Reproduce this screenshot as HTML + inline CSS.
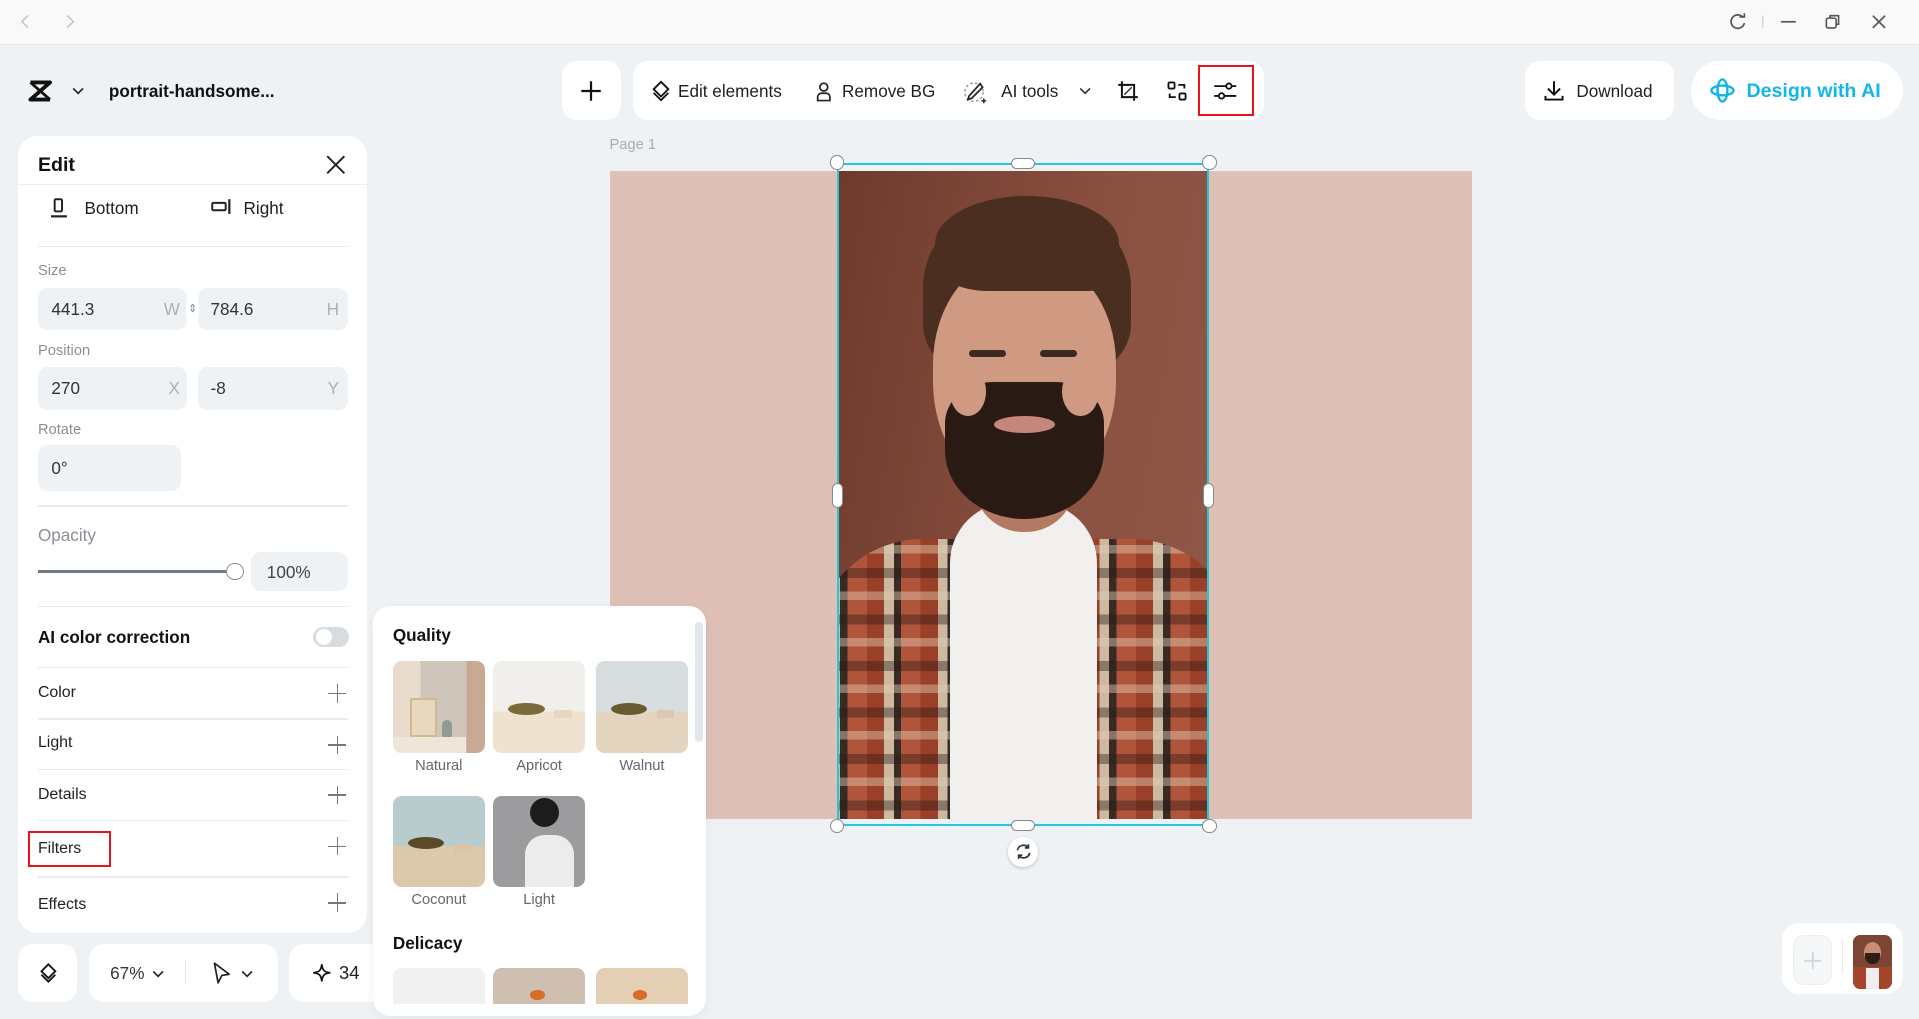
<!DOCTYPE html>
<html><head><meta charset="utf-8">
<style>
*{box-sizing:border-box;margin:0;padding:0}
html,body{width:1919px;height:1019px;overflow:hidden;background:#eef2f5}
#root{zoom:1.2239;width:1568px;height:833px;position:relative;font-family:"Liberation Sans",sans-serif;color:#1f1f1f;background:#eef2f5;overflow:hidden}
.a{position:absolute}
.card{position:absolute;background:#fff;border-radius:14px}
.t{position:absolute;white-space:nowrap}
.inp{position:absolute;background:#eef2f5;border-radius:8px;height:35px;font-size:14px;color:#333}
.inp span{position:absolute;top:9px}
.lbl{position:absolute;font-size:12px;color:#8a8f96}
.hr{position:absolute;left:31px;width:253px;height:1px;background:#e9ebee}
.row{position:absolute;left:31px;font-size:13px;color:#222}
.plus{position:absolute;left:268px;width:15px;height:15px}
.plus:before{content:"";position:absolute;left:7px;top:0;width:1.3px;height:15px;background:#777}
.plus:after{content:"";position:absolute;top:7px;left:0;height:1.3px;width:15px;background:#777}
.th{position:absolute;width:75px;height:75px;border-radius:7px;overflow:hidden}
.cap{position:absolute;width:75px;text-align:center;font-size:12px;color:#666}
.h{position:absolute;width:12px;height:12px;border-radius:50%;background:#fff;border:1.3px solid #888}
</style></head><body><div id="root">
<div class="a" style="left:0;top:0;width:1568px;height:37px;background:#f9f9f9;border-bottom:1px solid #e6e8ea"></div>
<svg class="a" style="left:14px;top:11px" width="50" height="14" viewBox="0 0 50 14"><path d="M9 2L4 7l5 5" fill="none" stroke="#c6c6c6" stroke-width="1.4"/><path d="M41 2l5 5-5 5" fill="none" stroke="#c6c6c6" stroke-width="1.4"/></svg>
<svg class="a" style="left:1410px;top:10px" width="136" height="16" viewBox="0 0 136 16"><path d="M14 4.5A5.5 5.5 0 1 0 15 9" fill="none" stroke="#555" stroke-width="1.4"/><path d="M11 4h4V1" fill="none" stroke="#555" stroke-width="1.4"/><line x1="30" y1="3" x2="30" y2="13" stroke="#ccc"/><line x1="45" y1="8" x2="57" y2="8" stroke="#555" stroke-width="1.4"/><rect x="82" y="5" width="8" height="8" rx="1.5" fill="none" stroke="#555" stroke-width="1.3"/><path d="M85 5V3h7v7h-2" fill="none" stroke="#555" stroke-width="1.3"/><path d="M120 3l10 10M130 3l-10 10" stroke="#555" stroke-width="1.4"/></svg>

<div class="a" style="left:8px;top:50px;width:232px;height:48px;border-radius:12px;background:#eef2f5"></div>
<svg class="a" style="left:23px;top:65px" width="20" height="18" viewBox="0 0 20 18"><path d="M2 2h16L2 16h16" fill="none" stroke="#111" stroke-width="3.2" stroke-linejoin="round"/><path d="M2 2l16 14M18 2L2 16" stroke="#111" stroke-width="2.2"/></svg>
<svg class="a" style="left:59px;top:70px" width="10" height="8" viewBox="0 0 10 8"><path d="M1 2l4 4 4-4" fill="none" stroke="#222" stroke-width="1.4"/></svg>
<div class="t" style="left:89px;top:66px;font-size:14px;font-weight:600;color:#111">portrait-handsome...</div>

<div class="card" style="left:459px;top:50px;width:48px;height:48px;border-radius:12px"></div>
<svg class="a" style="left:474px;top:65px" width="18" height="18"><path d="M9 1v16M1 9h16" stroke="#111" stroke-width="1.8"/></svg>
<div class="card" style="left:517px;top:50px;width:516px;height:48px;border-radius:12px"></div>
<svg class="a" style="left:531px;top:65px" width="18" height="18" viewBox="0 0 18 18"><path d="M9 1.5l6 6-6 6-6-6z" fill="none" stroke="#111" stroke-width="1.5"/><path d="M3 10.5l6 6 6-6" fill="none" stroke="#111" stroke-width="1.5"/></svg>
<div class="t" style="left:554px;top:66px;font-size:14px">Edit elements</div>
<svg class="a" style="left:665px;top:66px" width="16" height="17" viewBox="0 0 16 17"><circle cx="8" cy="5" r="3.2" fill="none" stroke="#222" stroke-width="1.4"/><path d="M3 16v-3a3 3 0 0 1 3-3h4a3 3 0 0 1 3 3v3z" fill="none" stroke="#222" stroke-width="1.4"/></svg>
<div class="t" style="left:688px;top:66px;font-size:14px">Remove BG</div>
<svg class="a" style="left:787px;top:65px" width="20" height="20" viewBox="0 0 20 20"><circle cx="9" cy="10" r="7.5" fill="none" stroke="#999" stroke-width="1.2" stroke-dasharray="2 2"/><path d="M14 3L5 13l-1 3 3-1 9-9z" fill="#fff" stroke="#222" stroke-width="1.4"/><path d="M17 15v4M15 17h4" stroke="#222" stroke-width="1.2"/></svg>
<div class="t" style="left:818px;top:66px;font-size:14px">AI tools</div>
<svg class="a" style="left:882px;top:70px" width="10" height="8"><path d="M1 2l4 4 4-4" fill="none" stroke="#333" stroke-width="1.3"/></svg>
<svg class="a" style="left:913px;top:65px" width="18" height="18" viewBox="0 0 18 18"><path d="M4 1v13h13M1 4h13v13" fill="none" stroke="#111" stroke-width="1.6"/><path d="M6 12l6-6" stroke="#111" stroke-width="1"/></svg>
<svg class="a" style="left:953px;top:65px" width="18" height="18" viewBox="0 0 18 18"><rect x="2" y="2" width="5" height="5" rx="1" fill="none" stroke="#111" stroke-width="1.5"/><rect x="11" y="11" width="5" height="5" rx="1" fill="none" stroke="#111" stroke-width="1.5"/><path d="M10 4h5v3M8 14H3v-3" fill="none" stroke="#111" stroke-width="1.5"/></svg>
<div class="a" style="left:979px;top:53px;width:46px;height:42px;border:2px solid #e8141a"></div>
<svg class="a" style="left:991px;top:65px" width="20" height="18" viewBox="0 0 20 18"><path d="M1 5h10M15 5h4M1 13h4M9 13h10" stroke="#111" stroke-width="1.5"/><circle cx="13" cy="5" r="2.2" fill="none" stroke="#111" stroke-width="1.5"/><circle cx="7" cy="13" r="2.2" fill="none" stroke="#111" stroke-width="1.5"/></svg>

<div class="card" style="left:1246px;top:50px;width:122px;height:48px;border-radius:12px"></div>
<svg class="a" style="left:1261px;top:65px" width="18" height="18" viewBox="0 0 18 18"><path d="M9 1v11M4 7l5 5 5-5M2 13v3h14v-3" fill="none" stroke="#111" stroke-width="1.6"/></svg>
<div class="t" style="left:1288px;top:66px;font-size:14px">Download</div>
<div class="card" style="left:1382px;top:50px;width:173px;height:48px;border-radius:24px"></div>
<svg class="a" style="left:1396px;top:63px" width="22" height="22" viewBox="0 0 22 22"><ellipse cx="11" cy="11" rx="4" ry="9" fill="none" stroke="#13b5ea" stroke-width="2"/><ellipse cx="11" cy="11" rx="9" ry="4" fill="none" stroke="#13b5ea" stroke-width="2"/></svg>
<div class="t" style="left:1427px;top:65px;font-size:16px;font-weight:700;color:#13b5ea">Design with AI</div>

<div class="t" style="left:498px;top:112px;font-size:12px;color:#a8adb3">Page 1</div>
<div class="a" style="left:498px;top:140px;width:705px;height:529px;background:#dfc0b6"></div>
<div class="a" style="left:684px;top:140px;width:304px;height:529px;overflow:hidden;background:linear-gradient(100deg,#6e3a2c,#8b5141 60%,#8f5848)">
  <div class="a" style="left:-20px;top:300px;width:350px;height:260px;border-radius:90px 90px 0 0;background:repeating-linear-gradient(90deg,#9a3f28 0 14px,#cdb9a0 14px 22px,#3a2a26 22px 28px,#b0553a 28px 44px)"></div>
  <div class="a" style="left:-20px;top:300px;width:350px;height:260px;border-radius:90px 90px 0 0;background:repeating-linear-gradient(0deg,rgba(40,25,20,.4) 0 8px,transparent 8px 20px,rgba(225,205,180,.45) 20px 27px,transparent 27px 38px)"></div>
  <div class="a" style="left:92px;top:270px;width:120px;height:270px;background:#f1f0ee;border-radius:50px 50px 0 0"></div>
  <div class="a" style="left:112px;top:220px;width:82px;height:75px;background:#b27a62;border-radius:0 0 40px 40px"></div>
  <div class="a" style="left:70px;top:20px;width:170px;height:150px;background:#4a2e1f;border-radius:50% 50% 30% 30%"></div>
  <div class="a" style="left:78px;top:70px;width:150px;height:195px;background:#d09a82;border-radius:45% 45% 48% 48%"></div>
  <div class="a" style="left:80px;top:20px;width:150px;height:78px;background:#4a2e1f;border-radius:60% 60% 20% 35%"></div>
  <div class="a" style="left:88px;top:172px;width:130px;height:112px;background:#2a1a14;border-radius:30% 30% 50% 50%"></div>
  <div class="a" style="left:92px;top:160px;width:30px;height:40px;background:#d09a82;border-radius:50%"></div>
  <div class="a" style="left:184px;top:160px;width:30px;height:40px;background:#d09a82;border-radius:50%"></div>
  <div class="a" style="left:128px;top:200px;width:50px;height:14px;background:#c4877a;border-radius:50%"></div>
  <div class="a" style="left:108px;top:146px;width:30px;height:6px;background:#3a2a22;border-radius:3px"></div>
  <div class="a" style="left:166px;top:146px;width:30px;height:6px;background:#3a2a22;border-radius:3px"></div>
</div>
<div class="a" style="left:684px;top:133px;width:304px;height:542px;border:2px solid #22c8dc"></div>
<div class="h" style="left:678px;top:127px"></div><div class="h" style="left:982px;top:127px"></div>
<div class="h" style="left:678px;top:669px"></div><div class="h" style="left:982px;top:669px"></div>
<div class="a" style="left:826px;top:129px;width:20px;height:9px;border-radius:5px;background:#fff;border:1.3px solid #888"></div>
<div class="a" style="left:826px;top:670px;width:20px;height:9px;border-radius:5px;background:#fff;border:1.3px solid #888"></div>
<div class="a" style="left:680px;top:395px;width:9px;height:20px;border-radius:5px;background:#fff;border:1.3px solid #888"></div>
<div class="a" style="left:983px;top:395px;width:9px;height:20px;border-radius:5px;background:#fff;border:1.3px solid #888"></div>
<div class="a" style="left:824px;top:684px;width:24px;height:24px;border-radius:50%;background:#fff;box-shadow:0 1px 3px rgba(0,0,0,.2)"></div>
<svg class="a" style="left:829px;top:689px" width="14" height="14" viewBox="0 0 14 14"><path d="M2 6a5 5 0 0 1 9-2M12 8a5 5 0 0 1-9 2" fill="none" stroke="#333" stroke-width="1.4"/><path d="M11 1v3H8M3 13v-3h3" fill="none" stroke="#333" stroke-width="1.4"/></svg>

<div class="card" style="left:15px;top:111px;width:285px;height:651px;border-radius:16px"></div>
<div class="t" style="left:31px;top:126px;font-size:16px;font-weight:700;color:#111">Edit</div>
<svg class="a" style="left:266px;top:127px" width="16" height="16"><path d="M1 1l14 14M15 1L1 15" stroke="#222" stroke-width="1.6"/></svg>
<div class="a" style="left:15px;top:150px;width:285px;height:1px;background:#eceef0"></div>
<svg class="a" style="left:42px;top:162px" width="14" height="16" viewBox="0 0 14 16"><rect x="3" y="1" width="6" height="10" rx="1" fill="none" stroke="#222" stroke-width="1.6"/><path d="M0 15h13" stroke="#222" stroke-width="1.8"/></svg>
<div class="t" style="left:69px;top:162px;font-size:14px">Bottom</div>
<svg class="a" style="left:172px;top:162px" width="18" height="14" viewBox="0 0 18 14"><rect x="1" y="4" width="11" height="6" rx="1" fill="none" stroke="#222" stroke-width="1.6"/><path d="M15 1v12" stroke="#222" stroke-width="1.8"/></svg>
<div class="t" style="left:199px;top:162px;font-size:14px">Right</div>
<div class="hr" style="top:201px"></div>
<div class="lbl" style="top:215px;left:31px">Size</div>
<div class="inp" style="left:31px;top:235px;width:122px;height:35px"><span style="left:11px">441.3</span><span style="right:6px;color:#aab0b6">W</span></div>
<div class="inp" style="left:162px;top:235px;width:122px;height:35px"><span style="left:10px">784.6</span><span style="right:7px;color:#aab0b6">H</span></div>
<div class="a" style="left:152px;top:245px;width:11px;height:16px;background:#fff;border-radius:3px;font-size:9px;color:#888;text-align:center;line-height:16px">⇕</div>
<div class="lbl" style="top:280px;left:31px">Position</div>
<div class="inp" style="left:31px;top:300px;width:122px;height:35px"><span style="left:11px">270</span><span style="right:6px;color:#aab0b6">X</span></div>
<div class="inp" style="left:162px;top:300px;width:122px;height:35px"><span style="left:10px">-8</span><span style="right:7px;color:#aab0b6">Y</span></div>
<div class="lbl" style="top:345px;left:31px">Rotate</div>
<div class="inp" style="left:31px;top:364px;width:117px;height:37px"><span style="left:11px;top:10px">0°</span></div>
<div class="hr" style="top:413px"></div>
<div class="t" style="left:31px;top:429px;font-size:14px;color:#8a8f96">Opacity</div>
<div class="a" style="left:31px;top:466px;width:162px;height:2px;background:#6f7a85"></div>
<div class="a" style="left:185px;top:460px;width:14px;height:14px;border-radius:50%;background:#fff;border:1.3px solid #8a9098"></div>
<div class="inp" style="left:205px;top:451px;width:79px;height:32px"><span style="left:13px;top:8px;color:#444">100%</span></div>
<div class="hr" style="top:495px"></div>
<div class="t" style="left:31px;top:512px;font-size:14px;font-weight:600;color:#111">AI color correction</div>
<div class="a" style="left:256px;top:512px;width:29px;height:17px;border-radius:9px;background:#d7dce1"></div>
<div class="a" style="left:258px;top:514px;width:13px;height:13px;border-radius:50%;background:#fff"></div>
<div class="hr" style="top:545px"></div>
<div class="row" style="top:559px">Color</div><div class="plus" style="top:559px"></div>
<div class="hr" style="top:587px"></div>
<div class="row" style="top:600px">Light</div><div class="plus" style="top:601px"></div>
<div class="hr" style="top:628px"></div>
<div class="row" style="top:642px">Details</div><div class="plus" style="top:642px"></div>
<div class="hr" style="top:670px"></div>
<div class="a" style="left:23px;top:679px;width:68px;height:29px;border:2px solid #e8141a"></div>
<div class="row" style="top:686px">Filters</div><div class="plus" style="top:684px"></div>
<div class="hr" style="top:716px"></div>
<div class="row" style="top:732px">Effects</div><div class="plus" style="top:730px"></div>

<div class="card" style="left:15px;top:771px;width:48px;height:48px;border-radius:12px"></div>
<svg class="a" style="left:31px;top:786px" width="17" height="18" viewBox="0 0 18 18"><path d="M9 1.5l6 6-6 6-6-6z" fill="none" stroke="#111" stroke-width="1.6"/><path d="M3 10.5l6 6 6-6" fill="none" stroke="#111" stroke-width="1.6"/></svg>
<div class="card" style="left:73px;top:771px;width:154px;height:48px;border-radius:12px"></div>
<div class="t" style="left:90px;top:787px;font-size:14px;color:#333">67%</div>
<svg class="a" style="left:124px;top:792px" width="10" height="8"><path d="M1 2l4 4 4-4" fill="none" stroke="#222" stroke-width="1.4"/></svg>
<div class="a" style="left:151px;top:785px;width:1px;height:20px;background:#e3e5e8"></div>
<svg class="a" style="left:173px;top:786px" width="16" height="19" viewBox="0 0 16 19"><path d="M2 1l12 9-6 1-3 6z" fill="none" stroke="#222" stroke-width="1.4" stroke-linejoin="round"/></svg>
<svg class="a" style="left:197px;top:792px" width="10" height="8"><path d="M1 2l4 4 4-4" fill="none" stroke="#222" stroke-width="1.4"/></svg>
<div class="card" style="left:236px;top:771px;width:80px;height:48px;border-radius:12px"></div>
<svg class="a" style="left:255px;top:787px" width="16" height="16" viewBox="0 0 16 16"><path d="M8 1C8.5 6 10 7.5 15 8 10 8.5 8.5 10 8 15 7.5 10 6 8.5 1 8 6 7.5 7.5 6 8 1z" fill="none" stroke="#111" stroke-width="1.4"/></svg>
<div class="t" style="left:277px;top:786px;font-size:15px;color:#222">34</div>

<div class="card" style="left:305px;top:495px;width:272px;height:335px;border-radius:14px;box-shadow:0 2px 8px rgba(0,0,0,.06)"></div>
<div class="a" style="left:568px;top:508px;width:6px;height:98px;border-radius:3px;background:#e3e6ea"></div>
<div class="t" style="left:321px;top:511px;font-size:14px;font-weight:600;color:#111">Quality</div>
<div class="th" style="left:321px;top:540px;background:linear-gradient(90deg,#e9dccd 0 30%,#cfc5bb 30% 80%,#c7a994 80%)"><div class="a" style="left:14px;top:30px;width:22px;height:32px;background:#e8d8bf;border:2px solid #d4b88f"></div><div class="a" style="left:40px;top:48px;width:8px;height:16px;border-radius:4px;background:#8f9c94"></div><div class="a" style="left:0;top:62px;width:60px;height:13px;background:#efe6d9"></div></div>
<div class="cap" style="left:321px;top:619px">Natural</div>
<div class="th" style="left:403px;top:540px;background:linear-gradient(180deg,#f0efec 0 55%,#efe3cf 55%)"><div class="a" style="left:12px;top:34px;width:30px;height:10px;background:#7a6a3a;border-radius:50%"></div><div class="a" style="left:50px;top:40px;width:14px;height:7px;background:#e8d6bf"></div></div>
<div class="cap" style="left:403px;top:619px">Apricot</div>
<div class="th" style="left:487px;top:540px;background:linear-gradient(180deg,#d8dedf 0 55%,#e3d5c0 55%)"><div class="a" style="left:12px;top:34px;width:30px;height:10px;background:#6a5a30;border-radius:50%"></div><div class="a" style="left:50px;top:40px;width:14px;height:7px;background:#dcc8ae"></div></div>
<div class="cap" style="left:487px;top:619px">Walnut</div>
<div class="th" style="left:321px;top:650px;background:linear-gradient(180deg,#b9cccd 0 55%,#dcc9ab 55%)"><div class="a" style="left:12px;top:34px;width:30px;height:10px;background:#5a4a2a;border-radius:50%"></div><div class="a" style="left:50px;top:40px;width:14px;height:7px;background:#d8c4a8"></div></div>
<div class="cap" style="left:321px;top:729px">Coconut</div>
<div class="th" style="left:403px;top:650px;background:#9c9c9e"><div class="a" style="left:30px;top:2px;width:24px;height:24px;border-radius:50%;background:#1c1c1c"></div><div class="a" style="left:26px;top:32px;width:40px;height:45px;border-radius:16px 16px 0 0;background:#ececec"></div></div>
<div class="cap" style="left:403px;top:729px">Light</div>
<div class="t" style="left:321px;top:762px;font-size:14px;font-weight:600;color:#111">Delicacy</div>
<div class="th" style="left:321px;top:791px;height:29px;border-radius:7px 7px 0 0;background:#f1f1f1"></div>
<div class="th" style="left:403px;top:791px;height:29px;border-radius:7px 7px 0 0;background:#cfbfb0"><div class="a" style="left:30px;top:18px;width:12px;height:8px;background:#d86a2a;border-radius:50%"></div></div>
<div class="th" style="left:487px;top:791px;height:29px;border-radius:7px 7px 0 0;background:#e3d0b4"><div class="a" style="left:30px;top:18px;width:12px;height:8px;background:#d86a2a;border-radius:50%"></div></div>

<div class="card" style="left:1456px;top:754px;width:99px;height:58px;border-radius:14px"></div>
<div class="a" style="left:1465px;top:764px;width:32px;height:41px;border-radius:9px;background:#f6f7f9;border:1px solid #eceef0"></div>
<svg class="a" style="left:1473px;top:777px" width="16" height="16"><path d="M8 1v14M1 8h14" stroke="#d2d6db" stroke-width="1.5"/></svg>
<div class="a" style="left:1505px;top:766px;width:1px;height:30px;background:#e6e8eb"></div>
<div class="a" style="left:1514px;top:764px;width:32px;height:44px;border-radius:6px;overflow:hidden;background:#7d4534"><div class="a" style="left:9px;top:6px;width:14px;height:17px;border-radius:50%;background:#c98e74"></div><div class="a" style="left:10px;top:15px;width:12px;height:9px;border-radius:0 0 6px 6px;background:#2d1d16"></div><div class="a" style="left:0;top:26px;width:32px;height:18px;background:#a5452c"></div><div class="a" style="left:11px;top:27px;width:10px;height:17px;background:#eee"></div></div>
</div></body></html>
